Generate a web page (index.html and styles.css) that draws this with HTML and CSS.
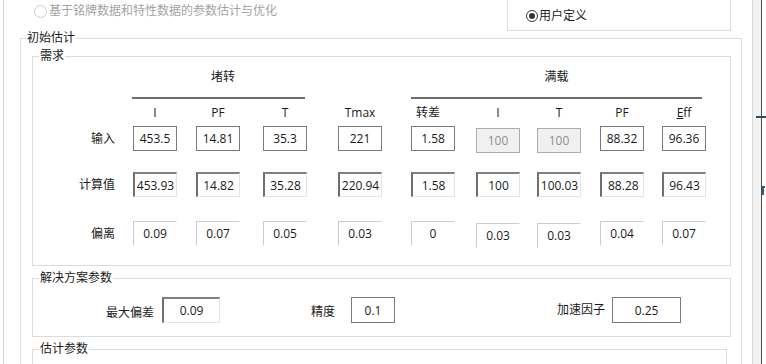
FILE: index.html
```html
<!DOCTYPE html>
<html lang="zh-CN">
<head>
<meta charset="UTF-8">
<title>参数估计</title>
<link rel="stylesheet" href="styles.css">
</head>
<body>

<div class="wrap">
  <div class="main">

    <div class="toprow">
      <label class="radio off"><span class="dot"></span>基于铭牌数据和特性数据的参数估计与优化</label>
      <div class="userbox">
        <label class="radio on"><span class="dot"></span>用户定义</label>
      </div>
    </div>

    <fieldset class="outer">
      <legend>初始估计</legend>
      <div class="outer-body">

        <fieldset class="box">
          <legend>需求</legend>
          <div class="grid">
            <div class="group stall">堵转</div>
            <div class="group full">满载</div>

            <span></span>
            <div class="hd">I</div>
            <div class="hd">PF</div>
            <div class="hd">T</div>
            <div class="hd">Tmax</div>
            <div class="hd slip">转差</div>
            <div class="hd">I</div>
            <div class="hd">T</div>
            <div class="hd">PF</div>
            <div class="hd"><u>E</u>ff</div>

            <div class="lbl">输入</div>
            <input class="cell plain" value="453.5" readonly>
            <input class="cell plain" value="14.81" readonly>
            <input class="cell plain" value="35.3" readonly>
            <input class="cell plain" value="221" readonly>
            <input class="cell plain" value="1.58" readonly>
            <input class="cell plain off low" value="100" disabled>
            <input class="cell plain off low" value="100" disabled>
            <input class="cell plain" value="88.32" readonly>
            <input class="cell plain" value="96.36" readonly>

            <div class="lbl">计算值</div>
            <input class="cell sunk" value="453.93" readonly>
            <input class="cell sunk" value="14.82" readonly>
            <input class="cell sunk" value="35.28" readonly>
            <input class="cell sunk" value="220.94" readonly>
            <input class="cell sunk" value="1.58" readonly>
            <input class="cell sunk" value="100" readonly>
            <input class="cell sunk" value="100.03" readonly>
            <input class="cell sunk clip" value="88.28" readonly>
            <input class="cell sunk" value="96.43" readonly>

            <div class="lbl">偏离</div>
            <input class="cell flat" value="0.09" readonly>
            <input class="cell flat" value="0.07" readonly>
            <input class="cell flat" value="0.05" readonly>
            <input class="cell flat" value="0.03" readonly>
            <input class="cell flat" value="0" readonly>
            <input class="cell flat low" value="0.03" readonly>
            <input class="cell flat low" value="0.03" readonly>
            <input class="cell flat" value="0.04" readonly>
            <input class="cell flat" value="0.07" readonly>
          </div>
        </fieldset>

        <fieldset class="box solve">
          <legend>解决方案参数</legend>
          <div class="sol">
            <span class="sl dev">最大偏差</span>
            <input class="sf sunk w-dev" value="0.09" readonly>
            <span class="sl acc">精度</span>
            <input class="sf plain w-acc" value="0.1" readonly>
            <span class="sl spd">加速因子</span>
            <input class="sf plain w-spd" value="0.25" readonly>
          </div>
        </fieldset>

        <fieldset class="box est">
          <legend>估计参数</legend>
          <div class="est-body"></div>
        </fieldset>

      </div>
    </fieldset>
  </div>

  <div class="strip"></div>
  <div class="edge">
    <span class="tick"></span>
    <span class="mark"></span>
  </div>
</div>

</body>
</html>
```

FILE: styles.css
```css
* {
  box-sizing: border-box;
}

body {
  margin: 0;
  font-family: "Open Sans", "Noto Sans CJK SC", sans-serif;
  font-size: 12px;
  color: #1a1a1a;
  background: #fff;
  overflow: hidden;
}

/* page frame */
.wrap {
  display: flex;
  width: 766px;
  height: 364px;
  overflow: hidden;
}

.main {
  width: 749px;
  margin-left: 3px;
  border-left: 1px solid #d6d6d6;
}

.strip {
  width: 10px;
  background: #f3f3f3;
  border-left: 1px solid #d9d9d9;
  border-right: 1px solid #4a4a4a;
  flex: none;
}

.edge {
  flex: 1;
  position: relative;
}

.tick {
  position: absolute;
  left: -6px;
  top: 116px;
  width: 12px;
  height: 2px;
  background: #34495e;
}

/* cut-off glyph of the neighbouring panel */
.mark {
  position: absolute;
  left: 0;
  top: 186px;
  width: 3px;
  height: 9px;
  border-left: 2px solid #2b5d8c;
  border-top: 2px solid #2b5d8c;
}

/* top radio row */
.toprow {
  display: flex;
  height: 31px;
}

.radio {
  display: flex;
  align-items: center;
  line-height: 14px;
}

.radio .dot {
  display: inline-block;
  border-radius: 50%;
  background: #fff;
  position: relative;
  margin-right: 1px;
}

.radio.off {
  margin-left: 30px;
  padding-top: 4px;
  align-self: flex-start;
  color: #a3a3a3;
}

.radio.off .dot {
  width: 13px;
  height: 13px;
  border: 1px solid #cfcfcf;
  margin-right: 2px;
}

.radio.on .dot {
  width: 12px;
  height: 12px;
  border: 1px solid #333;
}

.radio.on .dot::after {
  content: "";
  position: absolute;
  left: 2px;
  top: 2px;
  width: 6px;
  height: 6px;
  border-radius: 50%;
  background: #333;
}

.userbox {
  margin-left: auto;
  margin-right: 21px;
  width: 224px;
  height: 31px;
  border: 1px solid #dcdcdc;
  border-top: none;
  padding: 9px 0 0 18px;
}

/* group boxes */
fieldset {
  margin: 0;
  padding: 0;
  border: 1px solid #dcdcdc;
  min-width: 0;
}

legend {
  padding: 0 1px;
  line-height: 14px;
}

.outer {
  margin: 0 0 0 16px;
  width: 722px;
  height: 400px;
}

.outer legend {
  margin-left: 5px;
}

.outer-body {
  padding: 4px 10px 0 11px;
}

.box legend {
  margin-left: 6px;
}

.box + .box {
  margin-top: 5px;
}

.solve {
  margin-top: 4px;
}

/* demand table */
.grid {
  display: grid;
  grid-template-columns: 100px 63px 67px 75px 73px 65px 61px 63px 62px 44px;
  grid-template-rows: 36px 27px 46px 49px 27px;
  padding-bottom: 17px;
}

.group {
  padding: 7px 0 13px;
  line-height: 14px;
  text-align: center;
  border-bottom: 2px solid #6e6e6e;
  justify-self: start;
}

.group.stall {
  grid-column: 2 / 5;
  width: 173px;
  margin-left: -1px;
  padding-left: 9px;
}

.group.full {
  grid-column: 6 / 11;
  width: 291px;
}

.hd {
  width: 44px;
  padding-top: 7px;
  line-height: 14px;
  text-align: center;
}

.hd.slip {
  margin-left: -5px;
}

.lbl {
  text-align: right;
  padding-right: 18px;
  line-height: 25px;
  align-self: start;
}

.cell,
.sf {
  font: inherit;
  color: #1a1a1a;
  background: #fff;
  text-align: center;
  padding: 0 1px;
  margin: 0;
  outline: none;
  border-radius: 0;
}

.cell {
  width: 44px;
  height: 25px;
  align-self: start;
}

.plain {
  border: 1px solid #7a7a7a;
}

.plain.off {
  background: #f0f0f0;
  border-color: #adadad;
  color: #8f8f8f;
}

.sunk {
  border: 1px solid #e4e4e4;
  border-top: 2px solid #808080;
  border-left: 2px solid #6f6f6f;
}

.flat {
  border: 1px solid transparent;
  border-top-color: #cdcdcd;
  border-left-color: #cdcdcd;
}

.low {
  margin-top: 2px;
}

.clip {
  text-align: left;
  padding: 0 5px 0 6px;
}

/* solution parameters */
.sol {
  display: flex;
  align-items: flex-start;
  padding: 12px 0 13px 73px;
}

.sl {
  line-height: 14px;
}

.sl.dev {
  padding-top: 9px;
}

.sl.acc {
  margin-left: 91px;
  padding-top: 8px;
}

.sl.spd {
  margin-left: 162px;
  padding-top: 6px;
}

.sf {
  height: 26px;
}

.w-dev {
  width: 58px;
  margin-left: 8px;
}

.w-acc {
  width: 44px;
  margin-left: 16px;
}

.w-spd {
  width: 69px;
  margin-left: 7px;
}

.est {
  width: 695px;
}

.est-body {
  height: 60px;
}
```
